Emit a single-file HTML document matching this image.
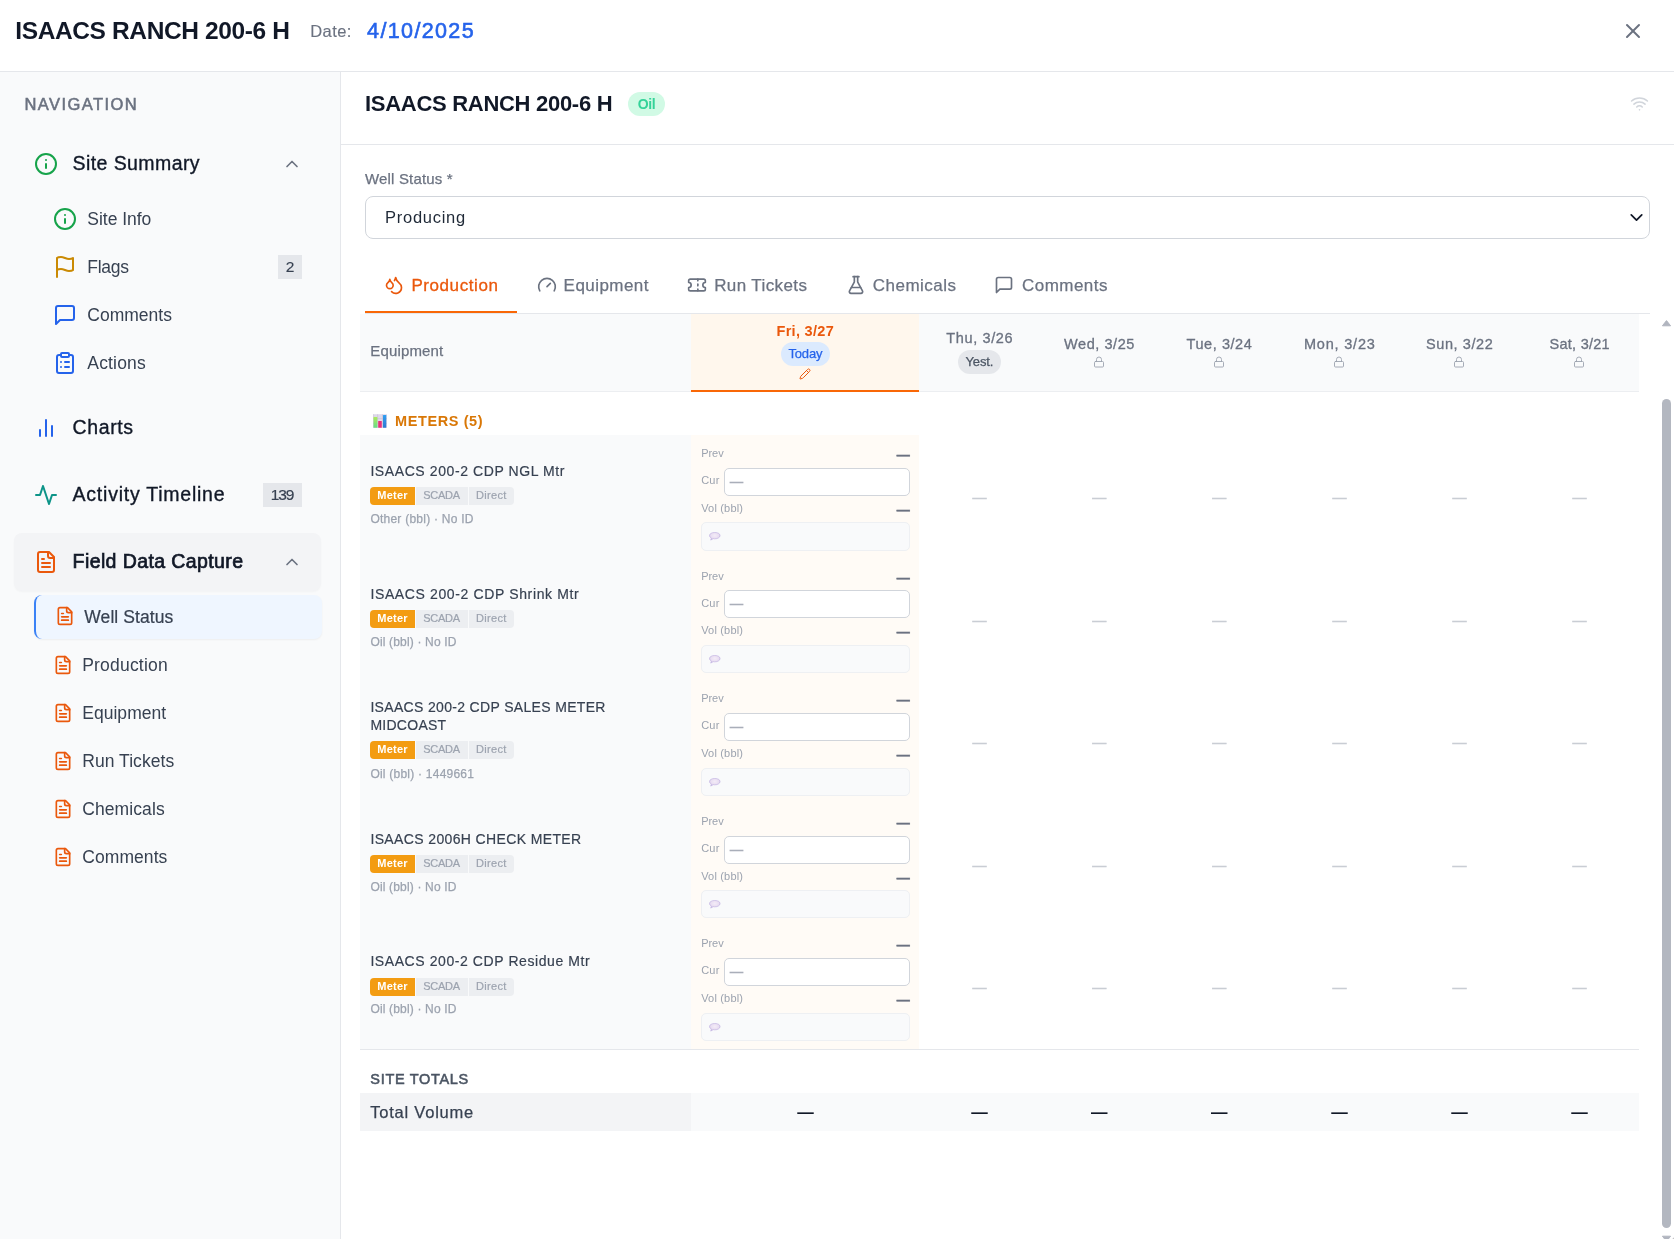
<!DOCTYPE html>
<html lang="en"><head><meta charset="utf-8"><title>ISAACS RANCH 200-6 H</title>
<style>
html,body{margin:0;padding:0}
body{width:1674px;height:1239px;overflow:hidden;position:relative;background:#fff;font-family:'Liberation Sans', sans-serif;}
.b{position:absolute;box-sizing:border-box}
.i{position:absolute;display:block;overflow:visible}
.t{position:absolute;white-space:pre;line-height:1;margin:0;font-weight:400}
#app{position:absolute;left:0;top:0;width:1674px;height:1239px;will-change:transform}
</style></head><body><div id="app">
<div class="b" style="left:0px;top:71px;width:1674px;height:1px;background:#e5e7eb"></div>
<h1 class="t" style="left:15.3px;top:19px;font-size:24.5px;color:#111827;font-weight:700;letter-spacing:-0.38px;">ISAACS RANCH 200-6 H</h1>
<span class="t" style="left:310.3px;top:23px;font-size:16.5px;color:#6b7280;letter-spacing:0.39px;-webkit-text-stroke:0.15px #6b7280;">Date:</span>
<span class="t" style="left:367.1px;top:21px;font-size:21.5px;color:#2563eb;letter-spacing:1.36px;-webkit-text-stroke:0.6px #2563eb;">4/10/2025</span>
<svg class="i" style="left:1621px;top:19px" width="24" height="24" viewBox="0 0 24 24" fill="none" stroke="#6b7280" stroke-width="2" stroke-linecap="round" stroke-linejoin="round"><path d="M18 6 6 18"/><path d="m6 6 12 12"/></svg>
<div class="b" style="left:0px;top:72px;width:340px;height:1167px;background:#f9fafb"></div>
<div class="b" style="left:340px;top:72px;width:1px;height:1167px;background:#e5e7eb"></div>
<span class="t" style="left:24.4px;top:96px;font-size:16.5px;color:#6b7280;letter-spacing:1.44px;-webkit-text-stroke:0.55px #6b7280;">NAVIGATION</span>
<svg class="i" style="left:34px;top:151.7px" width="24" height="24" viewBox="0 0 24 24" fill="none" stroke="#16a34a" stroke-width="2" stroke-linecap="round" stroke-linejoin="round"><circle cx="12" cy="12" r="10"/><path d="M12 16v-4"/><path d="M12 8h.01"/></svg>
<span class="t" style="left:72.6px;top:154px;font-size:19.5px;color:#111827;letter-spacing:0.41px;-webkit-text-stroke:0.35px #111827;">Site Summary</span>
<svg class="i" style="left:282.4px;top:153.7px" width="20" height="20" viewBox="0 0 24 24" fill="none" stroke="#6b7280" stroke-width="2" stroke-linecap="round" stroke-linejoin="round"><path d="m18 15-6-6-6 6"/></svg>
<svg class="i" style="left:53px;top:206.8px" width="24" height="24" viewBox="0 0 24 24" fill="none" stroke="#16a34a" stroke-width="2" stroke-linecap="round" stroke-linejoin="round"><circle cx="12" cy="12" r="10"/><path d="M12 16v-4"/><path d="M12 8h.01"/></svg>
<span class="t" style="left:87.3px;top:211px;font-size:17.5px;color:#374151;letter-spacing:-0.03px;">Site Info</span>
<svg class="i" style="left:53px;top:254.8px" width="24" height="24" viewBox="0 0 24 24" fill="none" stroke="#ca8a04" stroke-width="2" stroke-linecap="round" stroke-linejoin="round"><path d="M4 15s1-1 4-1 5 2 8 2 4-1 4-1V3s-1 1-4 1-5-2-8-2-4 1-4 1z"/><line x1="4" x2="4" y1="22" y2="15"/></svg>
<span class="t" style="left:87.3px;top:259px;font-size:17.5px;color:#374151;letter-spacing:-0.3px;">Flags</span>
<div class="b" style="left:278px;top:255px;width:24px;height:24px;background:#e5e7eb"></div>
<span class="t" style="left:285.69px;top:259px;font-size:15.5px;color:#374151;-webkit-text-stroke:0.15px #374151;">2</span>
<svg class="i" style="left:53px;top:302.8px" width="24" height="24" viewBox="0 0 24 24" fill="none" stroke="#2563eb" stroke-width="2" stroke-linecap="round" stroke-linejoin="round"><path d="M21 15a2 2 0 0 1-2 2H7l-4 4V5a2 2 0 0 1 2-2h14a2 2 0 0 1 2 2z"/></svg>
<span class="t" style="left:87.3px;top:307px;font-size:17.5px;color:#374151;letter-spacing:0.01px;">Comments</span>
<svg class="i" style="left:53px;top:350.8px" width="24" height="24" viewBox="0 0 24 24" fill="none" stroke="#2563eb" stroke-width="2" stroke-linecap="round" stroke-linejoin="round"><rect width="8" height="4" x="8" y="2" rx="1" ry="1"/><path d="M16 4h2a2 2 0 0 1 2 2v14a2 2 0 0 1-2 2H6a2 2 0 0 1-2-2V6a2 2 0 0 1 2-2h2"/><path d="M12 11h4"/><path d="M12 16h4"/><path d="M8 11h.01"/><path d="M8 16h.01"/></svg>
<span class="t" style="left:87.3px;top:355px;font-size:17.5px;color:#374151;letter-spacing:0.18px;">Actions</span>
<svg class="i" style="left:34px;top:415.8px" width="24" height="24" viewBox="0 0 24 24" fill="none" stroke="#2563eb" stroke-width="2" stroke-linecap="round" stroke-linejoin="round"><line x1="18" x2="18" y1="20" y2="10"/><line x1="12" x2="12" y1="20" y2="4"/><line x1="6" x2="6" y1="20" y2="14"/></svg>
<span class="t" style="left:72.6px;top:418px;font-size:19.5px;color:#111827;letter-spacing:0.61px;-webkit-text-stroke:0.35px #111827;">Charts</span>
<svg class="i" style="left:34px;top:482.5px" width="24" height="24" viewBox="0 0 24 24" fill="none" stroke="#0d9488" stroke-width="2" stroke-linecap="round" stroke-linejoin="round"><path d="M22 12h-4l-3 9L9 3l-3 9H2"/></svg>
<span class="t" style="left:72.6px;top:485px;font-size:19.5px;color:#111827;letter-spacing:0.76px;-webkit-text-stroke:0.35px #111827;">Activity Timeline</span>
<div class="b" style="left:263px;top:483px;width:39px;height:24px;background:#e5e7eb"></div>
<span class="t" style="left:270.7px;top:487px;font-size:15.5px;color:#374151;letter-spacing:-1.14px;-webkit-text-stroke:0.2px #374151;">139</span>
<div class="b" style="left:14.4px;top:533.2px;width:307.1px;height:58.2px;background:#f3f4f6;border-radius:8px;box-shadow:0 1px 2px rgba(0,0,0,.03)"></div>
<svg class="i" style="left:34px;top:549.8px" width="24" height="24" viewBox="0 0 24 24" fill="none" stroke="#ea580c" stroke-width="2" stroke-linecap="round" stroke-linejoin="round"><path d="M15 2H6a2 2 0 0 0-2 2v16a2 2 0 0 0 2 2h12a2 2 0 0 0 2-2V7Z"/><path d="M14 2v4a2 2 0 0 0 2 2h4"/><path d="M10 9H8"/><path d="M16 13H8"/><path d="M16 17H8"/></svg>
<span class="t" style="left:72.6px;top:552px;font-size:19.5px;color:#111827;letter-spacing:0.4px;-webkit-text-stroke:0.7px #111827;">Field Data Capture</span>
<svg class="i" style="left:282.4px;top:551.7px" width="20" height="20" viewBox="0 0 24 24" fill="none" stroke="#6b7280" stroke-width="2" stroke-linecap="round" stroke-linejoin="round"><path d="m18 15-6-6-6 6"/></svg>
<div class="b" style="left:34px;top:594.6px;width:287.5px;height:44.5px;background:#eff6ff;border-left:2px solid #3b82f6;border-radius:8px;box-shadow:0 1px 2px rgba(0,0,0,.05)"></div>
<svg class="i" style="left:54.5px;top:606.4px" width="20" height="20" viewBox="0 0 24 24" fill="none" stroke="#ea580c" stroke-width="2" stroke-linecap="round" stroke-linejoin="round"><path d="M15 2H6a2 2 0 0 0-2 2v16a2 2 0 0 0 2 2h12a2 2 0 0 0 2-2V7Z"/><path d="M14 2v4a2 2 0 0 0 2 2h4"/><path d="M10 9H8"/><path d="M16 13H8"/><path d="M16 17H8"/></svg>
<span class="t" style="left:84.3px;top:609px;font-size:17.5px;color:#374151;letter-spacing:0.08px;-webkit-text-stroke:0.2px #374151;">Well Status</span>
<svg class="i" style="left:52.5px;top:654.5px" width="20" height="20" viewBox="0 0 24 24" fill="none" stroke="#ea580c" stroke-width="2" stroke-linecap="round" stroke-linejoin="round"><path d="M15 2H6a2 2 0 0 0-2 2v16a2 2 0 0 0 2 2h12a2 2 0 0 0 2-2V7Z"/><path d="M14 2v4a2 2 0 0 0 2 2h4"/><path d="M10 9H8"/><path d="M16 13H8"/><path d="M16 17H8"/></svg>
<span class="t" style="left:82.2px;top:657px;font-size:17.5px;color:#374151;letter-spacing:0.2px;">Production</span>
<svg class="i" style="left:52.5px;top:702.5px" width="20" height="20" viewBox="0 0 24 24" fill="none" stroke="#ea580c" stroke-width="2" stroke-linecap="round" stroke-linejoin="round"><path d="M15 2H6a2 2 0 0 0-2 2v16a2 2 0 0 0 2 2h12a2 2 0 0 0 2-2V7Z"/><path d="M14 2v4a2 2 0 0 0 2 2h4"/><path d="M10 9H8"/><path d="M16 13H8"/><path d="M16 17H8"/></svg>
<span class="t" style="left:82.2px;top:705px;font-size:17.5px;color:#374151;letter-spacing:0.04px;">Equipment</span>
<svg class="i" style="left:52.5px;top:750.5px" width="20" height="20" viewBox="0 0 24 24" fill="none" stroke="#ea580c" stroke-width="2" stroke-linecap="round" stroke-linejoin="round"><path d="M15 2H6a2 2 0 0 0-2 2v16a2 2 0 0 0 2 2h12a2 2 0 0 0 2-2V7Z"/><path d="M14 2v4a2 2 0 0 0 2 2h4"/><path d="M10 9H8"/><path d="M16 13H8"/><path d="M16 17H8"/></svg>
<span class="t" style="left:82.2px;top:753px;font-size:17.5px;color:#374151;letter-spacing:0.06px;">Run Tickets</span>
<svg class="i" style="left:52.5px;top:798.5px" width="20" height="20" viewBox="0 0 24 24" fill="none" stroke="#ea580c" stroke-width="2" stroke-linecap="round" stroke-linejoin="round"><path d="M15 2H6a2 2 0 0 0-2 2v16a2 2 0 0 0 2 2h12a2 2 0 0 0 2-2V7Z"/><path d="M14 2v4a2 2 0 0 0 2 2h4"/><path d="M10 9H8"/><path d="M16 13H8"/><path d="M16 17H8"/></svg>
<span class="t" style="left:82.2px;top:801px;font-size:17.5px;color:#374151;letter-spacing:0.1px;">Chemicals</span>
<svg class="i" style="left:52.5px;top:846.5px" width="20" height="20" viewBox="0 0 24 24" fill="none" stroke="#ea580c" stroke-width="2" stroke-linecap="round" stroke-linejoin="round"><path d="M15 2H6a2 2 0 0 0-2 2v16a2 2 0 0 0 2 2h12a2 2 0 0 0 2-2V7Z"/><path d="M14 2v4a2 2 0 0 0 2 2h4"/><path d="M10 9H8"/><path d="M16 13H8"/><path d="M16 17H8"/></svg>
<span class="t" style="left:82.2px;top:849px;font-size:17.5px;color:#374151;letter-spacing:0.08px;">Comments</span>
<h2 class="t" style="left:365px;top:93px;font-size:22px;color:#111827;font-weight:700;letter-spacing:-0.29px;">ISAACS RANCH 200-6 H</h2>
<div class="b" style="left:628px;top:92px;width:37px;height:23.5px;background:#d1fae5;border-radius:12px"></div>
<span class="t" style="left:637.7px;top:97px;font-size:14px;color:#34d399;font-weight:700;letter-spacing:-0.34px;">Oil</span>
<svg class="i" style="left:1630.1px;top:94.2px" width="19" height="19" viewBox="0 0 24 24" fill="none" stroke="#d1d5db" stroke-width="2" stroke-linecap="round" stroke-linejoin="round"><path d="M12 20h.01"/><path d="M2 8.82a15 15 0 0 1 20 0"/><path d="M5 12.859a10 10 0 0 1 14 0"/><path d="M8.5 16.429a5 5 0 0 1 7 0"/></svg>
<div class="b" style="left:341px;top:144px;width:1333px;height:1px;background:#e5e7eb"></div>
<label class="t" style="left:365px;top:171px;font-size:15px;color:#6b7280;letter-spacing:0.17px;-webkit-text-stroke:0.25px #6b7280;">Well Status *</label>
<div class="b" style="left:365px;top:196.4px;width:1284.5px;height:42.2px;background:#fff;border:1px solid #d1d5db;border-radius:8px"></div>
<span class="t" style="left:385.1px;top:209px;font-size:16.5px;color:#1f2937;letter-spacing:0.71px;">Producing</span>
<svg class="i" style="left:1626.4px;top:206.5px" width="21" height="21" viewBox="0 0 24 24" fill="none" stroke="#111827" stroke-width="2" stroke-linecap="round" stroke-linejoin="round"><path d="m6 9 6 6 6-6"/></svg>
<div class="b" style="left:365px;top:313px;width:1284.5px;height:1px;background:#e5e7eb"></div>
<div class="b" style="left:365px;top:311px;width:151.7px;height:2px;background:#f96706"></div>
<svg class="i" style="left:383.7px;top:275px" width="20" height="20" viewBox="0 0 24 24" fill="none" stroke="#ea580c" stroke-width="2" stroke-linecap="round" stroke-linejoin="round"><path d="M7 16.3c2.2 0 4-1.83 4-4.05 0-1.16-.57-2.26-1.71-3.19S7.29 6.75 7 5.3c-.29 1.45-1.14 2.84-2.29 3.76S3 11.1 3 12.25c0 2.22 1.8 4.05 4 4.05z"/><path d="M12.56 6.6A10.97 10.97 0 0 0 14 3.02c.5 2.5 2 4.9 4 6.5s3 3.5 3 5.5a6.98 6.98 0 0 1-11.91 4.97"/></svg>
<span class="t" style="left:411.4px;top:277px;font-size:17px;color:#ea580c;letter-spacing:0.58px;-webkit-text-stroke:0.3px #ea580c;">Production</span>
<svg class="i" style="left:536.7px;top:275px" width="20" height="20" viewBox="0 0 24 24" fill="none" stroke="#6b7280" stroke-width="2" stroke-linecap="round" stroke-linejoin="round"><path d="m12 14 4-4"/><path d="M3.34 19a10 10 0 1 1 17.32 0"/></svg>
<span class="t" style="left:563.6px;top:277px;font-size:17px;color:#6b7280;letter-spacing:0.45px;-webkit-text-stroke:0.25px #6b7280;">Equipment</span>
<svg class="i" style="left:686.5px;top:275px" width="20" height="20" viewBox="0 0 24 24" fill="none" stroke="#6b7280" stroke-width="2" stroke-linecap="round" stroke-linejoin="round"><path d="M2 9a3 3 0 0 1 0 6v2a2 2 0 0 0 2 2h16a2 2 0 0 0 2-2v-2a3 3 0 0 1 0-6V7a2 2 0 0 0-2-2H4a2 2 0 0 0-2 2Z"/><path d="M13 5v2"/><path d="M13 17v2"/><path d="M13 11v2"/></svg>
<span class="t" style="left:714.2px;top:277px;font-size:17px;color:#6b7280;letter-spacing:0.39px;-webkit-text-stroke:0.25px #6b7280;">Run Tickets</span>
<svg class="i" style="left:845.8px;top:275px" width="20" height="20" viewBox="0 0 24 24" fill="none" stroke="#6b7280" stroke-width="2" stroke-linecap="round" stroke-linejoin="round"><path d="M14 2v6a2 2 0 0 0 .245.96l5.51 10.08A2 2 0 0 1 18 22H6a2 2 0 0 1-1.755-2.96l5.51-10.08A2 2 0 0 0 10 8V2"/><path d="M6.453 15h11.094"/><path d="M8.5 2h7"/></svg>
<span class="t" style="left:872.8px;top:277px;font-size:17px;color:#6b7280;letter-spacing:0.48px;-webkit-text-stroke:0.25px #6b7280;">Chemicals</span>
<svg class="i" style="left:994.4px;top:275px" width="20" height="20" viewBox="0 0 24 24" fill="none" stroke="#6b7280" stroke-width="2" stroke-linecap="round" stroke-linejoin="round"><path d="M21 15a2 2 0 0 1-2 2H7l-4 4V5a2 2 0 0 1 2-2h14a2 2 0 0 1 2 2z"/></svg>
<span class="t" style="left:1022px;top:277px;font-size:17px;color:#6b7280;letter-spacing:0.46px;-webkit-text-stroke:0.25px #6b7280;">Comments</span>
<div class="b" style="left:360px;top:314px;width:1279px;height:78px;background:#f9fafb;border-bottom:1px solid #eceef1"></div>
<div class="b" style="left:691px;top:314px;width:228px;height:76px;background:#fff7ed"></div>
<div class="b" style="left:691px;top:390px;width:228px;height:2px;background:#f96706"></div>
<span class="t" style="left:370.3px;top:343px;font-size:15px;color:#6b7280;letter-spacing:0.15px;-webkit-text-stroke:0.25px #6b7280;">Equipment</span>
<span class="t" style="left:776.5px;top:324px;font-size:14.5px;color:#ea580c;font-weight:700;letter-spacing:0.3px;">Fri, 3/27</span>
<div class="b" style="left:781.2px;top:342.3px;width:48.8px;height:23.8px;background:#dbeafe;border-radius:12px"></div>
<span class="t" style="left:788.5px;top:347px;font-size:13px;color:#2563eb;letter-spacing:-0.18px;-webkit-text-stroke:0.25px #2563eb;">Today</span>
<svg class="i" style="left:799px;top:368.2px" width="12" height="12" viewBox="0 0 24 24" fill="none" stroke="#ea580c" stroke-width="2" stroke-linecap="round" stroke-linejoin="round"><path d="M21.174 6.812a1 1 0 0 0-3.986-3.987L3.842 16.174a2 2 0 0 0-.5.83l-1.321 4.352a.5.5 0 0 0 .623.622l4.353-1.32a2 2 0 0 0 .83-.497z"/><path d="m15 5 4 4"/></svg>
<span class="t" style="left:946.25px;top:331px;font-size:14.5px;color:#6b7280;letter-spacing:0.63px;-webkit-text-stroke:0.3px #6b7280;">Thu, 3/26</span>
<div class="b" style="left:957.7px;top:350.2px;width:43.3px;height:23.7px;background:#e5e7eb;border-radius:12px"></div>
<span class="t" style="left:965.4px;top:355px;font-size:13px;color:#4b5563;letter-spacing:-0.11px;-webkit-text-stroke:0.25px #4b5563;">Yest.</span>
<span class="t" style="left:1064.05px;top:337px;font-size:14.5px;color:#6b7280;letter-spacing:0.56px;-webkit-text-stroke:0.3px #6b7280;">Wed, 3/25</span>
<svg class="i" style="left:1092.9px;top:356.2px" width="12" height="12" viewBox="0 0 24 24" fill="none" stroke="#9ca3af" stroke-width="1.8" stroke-linecap="round" stroke-linejoin="round"><rect width="18" height="11" x="3" y="11" rx="2" ry="2"/><path d="M7 11V7a5 5 0 0 1 10 0v4"/></svg>
<span class="t" style="left:1186.6px;top:337px;font-size:14.5px;color:#6b7280;letter-spacing:0.56px;-webkit-text-stroke:0.3px #6b7280;">Tue, 3/24</span>
<svg class="i" style="left:1212.9px;top:356.2px" width="12" height="12" viewBox="0 0 24 24" fill="none" stroke="#9ca3af" stroke-width="1.8" stroke-linecap="round" stroke-linejoin="round"><rect width="18" height="11" x="3" y="11" rx="2" ry="2"/><path d="M7 11V7a5 5 0 0 1 10 0v4"/></svg>
<span class="t" style="left:1304px;top:337px;font-size:14.5px;color:#6b7280;letter-spacing:0.79px;-webkit-text-stroke:0.3px #6b7280;">Mon, 3/23</span>
<svg class="i" style="left:1333.1px;top:356.2px" width="12" height="12" viewBox="0 0 24 24" fill="none" stroke="#9ca3af" stroke-width="1.8" stroke-linecap="round" stroke-linejoin="round"><rect width="18" height="11" x="3" y="11" rx="2" ry="2"/><path d="M7 11V7a5 5 0 0 1 10 0v4"/></svg>
<span class="t" style="left:1426.1px;top:337px;font-size:14.5px;color:#6b7280;letter-spacing:0.57px;-webkit-text-stroke:0.3px #6b7280;">Sun, 3/22</span>
<svg class="i" style="left:1453.1px;top:356.2px" width="12" height="12" viewBox="0 0 24 24" fill="none" stroke="#9ca3af" stroke-width="1.8" stroke-linecap="round" stroke-linejoin="round"><rect width="18" height="11" x="3" y="11" rx="2" ry="2"/><path d="M7 11V7a5 5 0 0 1 10 0v4"/></svg>
<span class="t" style="left:1549.55px;top:337px;font-size:14.5px;color:#6b7280;letter-spacing:0.26px;-webkit-text-stroke:0.3px #6b7280;">Sat, 3/21</span>
<svg class="i" style="left:1573.3px;top:356.2px" width="12" height="12" viewBox="0 0 24 24" fill="none" stroke="#9ca3af" stroke-width="1.8" stroke-linecap="round" stroke-linejoin="round"><rect width="18" height="11" x="3" y="11" rx="2" ry="2"/><path d="M7 11V7a5 5 0 0 1 10 0v4"/></svg>
<svg class="i" style="left:372.8px;top:414px" width="14.2" height="14" viewBox="0 0 14.2 14"><defs><linearGradient id="eg" x1="0" y1="0" x2="0" y2="1"><stop offset="0" stop-color="#aeea5c"/><stop offset="1" stop-color="#66dd86"/></linearGradient><linearGradient id="eb" x1="0" y1="0" x2="0" y2="1"><stop offset="0" stop-color="#2f9ff2"/><stop offset="1" stop-color="#2f78d0"/></linearGradient></defs><rect x="0.2" y="0.2" width="13.8" height="13.6" fill="#dfd9ea"/><path d="M0.6 0.2v13.6M4.6 0.2v13.6M9.5 0.2v13.6M0.2 4.6h13.8M0.2 9.4h13.8" stroke="#c3bdd0" stroke-width="0.5" fill="none"/><rect x="0.5" y="3" width="3.9" height="10.8" rx="0.5" fill="url(#eg)"/><rect x="5.2" y="6.9" width="3.6" height="6.9" rx="0.5" fill="#e93079"/><rect x="10" y="1" width="3.3" height="12.8" rx="0.5" fill="url(#eb)"/></svg>
<span class="t" style="left:395.1px;top:414px;font-size:14.5px;color:#d97706;font-weight:700;letter-spacing:0.59px;">METERS (5)</span>
<div class="b" style="left:360px;top:435px;width:331px;height:614px;background:#f9fafb"></div>
<div class="b" style="left:691px;top:435px;width:228px;height:614px;background:#fffbf6"></div>
<div class="b" style="left:360px;top:1049px;width:1279px;height:1px;background:#e5e7eb"></div>
<span class="t" style="left:370.4px;top:464px;font-size:14px;color:#374151;letter-spacing:0.59px;-webkit-text-stroke:0.18px #374151;">ISAACS 200-2 CDP NGL Mtr</span>
<div class="b" style="left:370px;top:487.2px;width:45px;height:17.8px;background:#f39c12;border-radius:4px 0 0 4px"></div>
<span class="t" style="left:377.25px;top:490px;font-size:11px;color:#fff;font-weight:700;letter-spacing:0.24px;">Meter</span>
<div class="b" style="left:416.2px;top:487.2px;width:51.5px;height:17.8px;background:#eceef1"></div>
<span class="t" style="left:423.2px;top:490px;font-size:11px;color:#9ca3af;letter-spacing:-0.28px;-webkit-text-stroke:0.2px #9ca3af;">SCADA</span>
<div class="b" style="left:469px;top:487.2px;width:44.5px;height:17.8px;background:#eceef1;border-radius:0 4px 4px 0"></div>
<span class="t" style="left:475.95px;top:490px;font-size:11px;color:#9ca3af;letter-spacing:0.35px;-webkit-text-stroke:0.2px #9ca3af;">Direct</span>
<span class="t" style="left:370.4px;top:513px;font-size:12px;color:#9ca3af;letter-spacing:0.24px;-webkit-text-stroke:0.25px #9ca3af;">Other (bbl) · No ID</span>
<span class="t" style="left:701.2px;top:448px;font-size:11px;color:#9ca3af;letter-spacing:-0.04px;">Prev</span>
<span class="t" style="left:896.8px;top:448px;font-size:13px;color:#6b7280;font-weight:700;-webkit-text-stroke:0.6px #6b7280;">—</span>
<span class="t" style="left:701.2px;top:475px;font-size:11px;color:#9ca3af;letter-spacing:0.23px;">Cur</span>
<div class="b" style="left:724.1px;top:468px;width:185.7px;height:28px;background:#fff;border:1px solid #d1d5db;border-radius:5px"></div>
<span class="t" style="left:729.9px;top:475px;font-size:13px;color:#a9aeb9;-webkit-text-stroke:0.8px #a9aeb9;">—</span>
<span class="t" style="left:701.2px;top:503px;font-size:11px;color:#9ca3af;letter-spacing:0.18px;">Vol (bbl)</span>
<span class="t" style="left:896.8px;top:503px;font-size:13px;color:#6b7280;font-weight:700;-webkit-text-stroke:0.6px #6b7280;">—</span>
<div class="b" style="left:701.2px;top:522px;width:208.6px;height:29px;background:#f9fafb;border:1px solid #eef0f3;border-radius:5px"></div>
<svg class="i" style="left:708.7px;top:531.7px;opacity:.8" width="11.5" height="8.5" viewBox="0 0 23 17"><defs><radialGradient id="g0" cx="50%" cy="40%" r="65%"><stop offset="0" stop-color="#f3e9f7"/><stop offset="0.55" stop-color="#e6d8f0"/><stop offset="1" stop-color="#bfaee0"/></radialGradient></defs><path d="M11.5 .9C5.500 .9 .9 3.600 .9 7.100c0 2 1.500 3.800 3.900 4.900L3.400 16.200l5-2.800c1 .2 2 .3 3.100 .3 6 0 10.700-2.900 10.700-6.600S17.500 .9 11.500 .9z" fill="url(#g0)" stroke="#a893d6" stroke-width="1.1" stroke-linejoin="round"/></svg>
<span class="t" style="left:972.4px;top:490px;font-size:14px;color:#c9cdd4;-webkit-text-stroke:0.5px #c9cdd4;">—</span>
<span class="t" style="left:1092.2px;top:490px;font-size:14px;color:#c9cdd4;-webkit-text-stroke:0.5px #c9cdd4;">—</span>
<span class="t" style="left:1212.2px;top:490px;font-size:14px;color:#c9cdd4;-webkit-text-stroke:0.5px #c9cdd4;">—</span>
<span class="t" style="left:1332.4px;top:490px;font-size:14px;color:#c9cdd4;-webkit-text-stroke:0.5px #c9cdd4;">—</span>
<span class="t" style="left:1452.4px;top:490px;font-size:14px;color:#c9cdd4;-webkit-text-stroke:0.5px #c9cdd4;">—</span>
<span class="t" style="left:1572.6px;top:490px;font-size:14px;color:#c9cdd4;-webkit-text-stroke:0.5px #c9cdd4;">—</span>
<span class="t" style="left:370.4px;top:587px;font-size:14px;color:#374151;letter-spacing:0.63px;-webkit-text-stroke:0.18px #374151;">ISAACS 200-2 CDP Shrink Mtr</span>
<div class="b" style="left:370px;top:610.2px;width:45px;height:17.8px;background:#f39c12;border-radius:4px 0 0 4px"></div>
<span class="t" style="left:377.25px;top:613px;font-size:11px;color:#fff;font-weight:700;letter-spacing:0.24px;">Meter</span>
<div class="b" style="left:416.2px;top:610.2px;width:51.5px;height:17.8px;background:#eceef1"></div>
<span class="t" style="left:423.2px;top:613px;font-size:11px;color:#9ca3af;letter-spacing:-0.28px;-webkit-text-stroke:0.2px #9ca3af;">SCADA</span>
<div class="b" style="left:469px;top:610.2px;width:44.5px;height:17.8px;background:#eceef1;border-radius:0 4px 4px 0"></div>
<span class="t" style="left:475.95px;top:613px;font-size:11px;color:#9ca3af;letter-spacing:0.35px;-webkit-text-stroke:0.2px #9ca3af;">Direct</span>
<span class="t" style="left:370.4px;top:636px;font-size:12px;color:#9ca3af;letter-spacing:0.17px;-webkit-text-stroke:0.25px #9ca3af;">Oil (bbl) · No ID</span>
<span class="t" style="left:701.2px;top:571px;font-size:11px;color:#9ca3af;letter-spacing:-0.04px;">Prev</span>
<span class="t" style="left:896.8px;top:571px;font-size:13px;color:#6b7280;font-weight:700;-webkit-text-stroke:0.6px #6b7280;">—</span>
<span class="t" style="left:701.2px;top:598px;font-size:11px;color:#9ca3af;letter-spacing:0.23px;">Cur</span>
<div class="b" style="left:724.1px;top:590px;width:185.7px;height:28px;background:#fff;border:1px solid #d1d5db;border-radius:5px"></div>
<span class="t" style="left:729.9px;top:597px;font-size:13px;color:#a9aeb9;-webkit-text-stroke:0.8px #a9aeb9;">—</span>
<span class="t" style="left:701.2px;top:625px;font-size:11px;color:#9ca3af;letter-spacing:0.18px;">Vol (bbl)</span>
<span class="t" style="left:896.8px;top:625px;font-size:13px;color:#6b7280;font-weight:700;-webkit-text-stroke:0.6px #6b7280;">—</span>
<div class="b" style="left:701.2px;top:645px;width:208.6px;height:28px;background:#f9fafb;border:1px solid #eef0f3;border-radius:5px"></div>
<svg class="i" style="left:708.7px;top:654.7px;opacity:.8" width="11.5" height="8.5" viewBox="0 0 23 17"><defs><radialGradient id="g1" cx="50%" cy="40%" r="65%"><stop offset="0" stop-color="#f3e9f7"/><stop offset="0.55" stop-color="#e6d8f0"/><stop offset="1" stop-color="#bfaee0"/></radialGradient></defs><path d="M11.5 .9C5.500 .9 .9 3.600 .9 7.100c0 2 1.500 3.800 3.900 4.900L3.400 16.200l5-2.800c1 .2 2 .3 3.100 .3 6 0 10.700-2.900 10.700-6.600S17.500 .9 11.500 .9z" fill="url(#g1)" stroke="#a893d6" stroke-width="1.1" stroke-linejoin="round"/></svg>
<span class="t" style="left:972.4px;top:613px;font-size:14px;color:#c9cdd4;-webkit-text-stroke:0.5px #c9cdd4;">—</span>
<span class="t" style="left:1092.2px;top:613px;font-size:14px;color:#c9cdd4;-webkit-text-stroke:0.5px #c9cdd4;">—</span>
<span class="t" style="left:1212.2px;top:613px;font-size:14px;color:#c9cdd4;-webkit-text-stroke:0.5px #c9cdd4;">—</span>
<span class="t" style="left:1332.4px;top:613px;font-size:14px;color:#c9cdd4;-webkit-text-stroke:0.5px #c9cdd4;">—</span>
<span class="t" style="left:1452.4px;top:613px;font-size:14px;color:#c9cdd4;-webkit-text-stroke:0.5px #c9cdd4;">—</span>
<span class="t" style="left:1572.6px;top:613px;font-size:14px;color:#c9cdd4;-webkit-text-stroke:0.5px #c9cdd4;">—</span>
<span class="t" style="left:370.4px;top:700px;font-size:14px;color:#374151;letter-spacing:0.33px;-webkit-text-stroke:0.18px #374151;">ISAACS 200-2 CDP SALES METER</span>
<span class="t" style="left:370.4px;top:718px;font-size:14px;color:#374151;letter-spacing:0.27px;-webkit-text-stroke:0.18px #374151;">MIDCOAST</span>
<div class="b" style="left:370px;top:741.2px;width:45px;height:17.8px;background:#f39c12;border-radius:4px 0 0 4px"></div>
<span class="t" style="left:377.25px;top:744px;font-size:11px;color:#fff;font-weight:700;letter-spacing:0.24px;">Meter</span>
<div class="b" style="left:416.2px;top:741.2px;width:51.5px;height:17.8px;background:#eceef1"></div>
<span class="t" style="left:423.2px;top:744px;font-size:11px;color:#9ca3af;letter-spacing:-0.28px;-webkit-text-stroke:0.2px #9ca3af;">SCADA</span>
<div class="b" style="left:469px;top:741.2px;width:44.5px;height:17.8px;background:#eceef1;border-radius:0 4px 4px 0"></div>
<span class="t" style="left:475.95px;top:744px;font-size:11px;color:#9ca3af;letter-spacing:0.35px;-webkit-text-stroke:0.2px #9ca3af;">Direct</span>
<span class="t" style="left:370.4px;top:768px;font-size:12px;color:#9ca3af;letter-spacing:0.23px;-webkit-text-stroke:0.25px #9ca3af;">Oil (bbl) · 1449661</span>
<span class="t" style="left:701.2px;top:693px;font-size:11px;color:#9ca3af;letter-spacing:-0.04px;">Prev</span>
<span class="t" style="left:896.8px;top:693px;font-size:13px;color:#6b7280;font-weight:700;-webkit-text-stroke:0.6px #6b7280;">—</span>
<span class="t" style="left:701.2px;top:720px;font-size:11px;color:#9ca3af;letter-spacing:0.23px;">Cur</span>
<div class="b" style="left:724.1px;top:713px;width:185.7px;height:28px;background:#fff;border:1px solid #d1d5db;border-radius:5px"></div>
<span class="t" style="left:729.9px;top:720px;font-size:13px;color:#a9aeb9;-webkit-text-stroke:0.8px #a9aeb9;">—</span>
<span class="t" style="left:701.2px;top:748px;font-size:11px;color:#9ca3af;letter-spacing:0.18px;">Vol (bbl)</span>
<span class="t" style="left:896.8px;top:748px;font-size:13px;color:#6b7280;font-weight:700;-webkit-text-stroke:0.6px #6b7280;">—</span>
<div class="b" style="left:701.2px;top:768px;width:208.6px;height:28px;background:#f9fafb;border:1px solid #eef0f3;border-radius:5px"></div>
<svg class="i" style="left:708.7px;top:777.7px;opacity:.8" width="11.5" height="8.5" viewBox="0 0 23 17"><defs><radialGradient id="g2" cx="50%" cy="40%" r="65%"><stop offset="0" stop-color="#f3e9f7"/><stop offset="0.55" stop-color="#e6d8f0"/><stop offset="1" stop-color="#bfaee0"/></radialGradient></defs><path d="M11.5 .9C5.500 .9 .9 3.600 .9 7.100c0 2 1.500 3.800 3.900 4.900L3.400 16.200l5-2.800c1 .2 2 .3 3.100 .3 6 0 10.700-2.900 10.700-6.600S17.500 .9 11.500 .9z" fill="url(#g2)" stroke="#a893d6" stroke-width="1.1" stroke-linejoin="round"/></svg>
<span class="t" style="left:972.4px;top:735px;font-size:14px;color:#c9cdd4;-webkit-text-stroke:0.5px #c9cdd4;">—</span>
<span class="t" style="left:1092.2px;top:735px;font-size:14px;color:#c9cdd4;-webkit-text-stroke:0.5px #c9cdd4;">—</span>
<span class="t" style="left:1212.2px;top:735px;font-size:14px;color:#c9cdd4;-webkit-text-stroke:0.5px #c9cdd4;">—</span>
<span class="t" style="left:1332.4px;top:735px;font-size:14px;color:#c9cdd4;-webkit-text-stroke:0.5px #c9cdd4;">—</span>
<span class="t" style="left:1452.4px;top:735px;font-size:14px;color:#c9cdd4;-webkit-text-stroke:0.5px #c9cdd4;">—</span>
<span class="t" style="left:1572.6px;top:735px;font-size:14px;color:#c9cdd4;-webkit-text-stroke:0.5px #c9cdd4;">—</span>
<span class="t" style="left:370.4px;top:832px;font-size:14px;color:#374151;letter-spacing:0.37px;-webkit-text-stroke:0.18px #374151;">ISAACS 2006H CHECK METER</span>
<div class="b" style="left:370px;top:855.2px;width:45px;height:17.8px;background:#f39c12;border-radius:4px 0 0 4px"></div>
<span class="t" style="left:377.25px;top:858px;font-size:11px;color:#fff;font-weight:700;letter-spacing:0.24px;">Meter</span>
<div class="b" style="left:416.2px;top:855.2px;width:51.5px;height:17.8px;background:#eceef1"></div>
<span class="t" style="left:423.2px;top:858px;font-size:11px;color:#9ca3af;letter-spacing:-0.28px;-webkit-text-stroke:0.2px #9ca3af;">SCADA</span>
<div class="b" style="left:469px;top:855.2px;width:44.5px;height:17.8px;background:#eceef1;border-radius:0 4px 4px 0"></div>
<span class="t" style="left:475.95px;top:858px;font-size:11px;color:#9ca3af;letter-spacing:0.35px;-webkit-text-stroke:0.2px #9ca3af;">Direct</span>
<span class="t" style="left:370.4px;top:881px;font-size:12px;color:#9ca3af;letter-spacing:0.17px;-webkit-text-stroke:0.25px #9ca3af;">Oil (bbl) · No ID</span>
<span class="t" style="left:701.2px;top:816px;font-size:11px;color:#9ca3af;letter-spacing:-0.04px;">Prev</span>
<span class="t" style="left:896.8px;top:816px;font-size:13px;color:#6b7280;font-weight:700;-webkit-text-stroke:0.6px #6b7280;">—</span>
<span class="t" style="left:701.2px;top:843px;font-size:11px;color:#9ca3af;letter-spacing:0.23px;">Cur</span>
<div class="b" style="left:724.1px;top:836px;width:185.7px;height:28px;background:#fff;border:1px solid #d1d5db;border-radius:5px"></div>
<span class="t" style="left:729.9px;top:843px;font-size:13px;color:#a9aeb9;-webkit-text-stroke:0.8px #a9aeb9;">—</span>
<span class="t" style="left:701.2px;top:871px;font-size:11px;color:#9ca3af;letter-spacing:0.18px;">Vol (bbl)</span>
<span class="t" style="left:896.8px;top:871px;font-size:13px;color:#6b7280;font-weight:700;-webkit-text-stroke:0.6px #6b7280;">—</span>
<div class="b" style="left:701.2px;top:890px;width:208.6px;height:28px;background:#f9fafb;border:1px solid #eef0f3;border-radius:5px"></div>
<svg class="i" style="left:708.7px;top:899.7px;opacity:.8" width="11.5" height="8.5" viewBox="0 0 23 17"><defs><radialGradient id="g3" cx="50%" cy="40%" r="65%"><stop offset="0" stop-color="#f3e9f7"/><stop offset="0.55" stop-color="#e6d8f0"/><stop offset="1" stop-color="#bfaee0"/></radialGradient></defs><path d="M11.5 .9C5.500 .9 .9 3.600 .9 7.100c0 2 1.500 3.800 3.900 4.900L3.400 16.200l5-2.800c1 .2 2 .3 3.100 .3 6 0 10.700-2.900 10.700-6.600S17.500 .9 11.500 .9z" fill="url(#g3)" stroke="#a893d6" stroke-width="1.1" stroke-linejoin="round"/></svg>
<span class="t" style="left:972.4px;top:858px;font-size:14px;color:#c9cdd4;-webkit-text-stroke:0.5px #c9cdd4;">—</span>
<span class="t" style="left:1092.2px;top:858px;font-size:14px;color:#c9cdd4;-webkit-text-stroke:0.5px #c9cdd4;">—</span>
<span class="t" style="left:1212.2px;top:858px;font-size:14px;color:#c9cdd4;-webkit-text-stroke:0.5px #c9cdd4;">—</span>
<span class="t" style="left:1332.4px;top:858px;font-size:14px;color:#c9cdd4;-webkit-text-stroke:0.5px #c9cdd4;">—</span>
<span class="t" style="left:1452.4px;top:858px;font-size:14px;color:#c9cdd4;-webkit-text-stroke:0.5px #c9cdd4;">—</span>
<span class="t" style="left:1572.6px;top:858px;font-size:14px;color:#c9cdd4;-webkit-text-stroke:0.5px #c9cdd4;">—</span>
<span class="t" style="left:370.4px;top:954px;font-size:14px;color:#374151;letter-spacing:0.58px;-webkit-text-stroke:0.18px #374151;">ISAACS 200-2 CDP Residue Mtr</span>
<div class="b" style="left:370px;top:978.2px;width:45px;height:17.8px;background:#f39c12;border-radius:4px 0 0 4px"></div>
<span class="t" style="left:377.25px;top:981px;font-size:11px;color:#fff;font-weight:700;letter-spacing:0.24px;">Meter</span>
<div class="b" style="left:416.2px;top:978.2px;width:51.5px;height:17.8px;background:#eceef1"></div>
<span class="t" style="left:423.2px;top:981px;font-size:11px;color:#9ca3af;letter-spacing:-0.28px;-webkit-text-stroke:0.2px #9ca3af;">SCADA</span>
<div class="b" style="left:469px;top:978.2px;width:44.5px;height:17.8px;background:#eceef1;border-radius:0 4px 4px 0"></div>
<span class="t" style="left:475.95px;top:981px;font-size:11px;color:#9ca3af;letter-spacing:0.35px;-webkit-text-stroke:0.2px #9ca3af;">Direct</span>
<span class="t" style="left:370.4px;top:1003px;font-size:12px;color:#9ca3af;letter-spacing:0.17px;-webkit-text-stroke:0.25px #9ca3af;">Oil (bbl) · No ID</span>
<span class="t" style="left:701.2px;top:938px;font-size:11px;color:#9ca3af;letter-spacing:-0.04px;">Prev</span>
<span class="t" style="left:896.8px;top:938px;font-size:13px;color:#6b7280;font-weight:700;-webkit-text-stroke:0.6px #6b7280;">—</span>
<span class="t" style="left:701.2px;top:965px;font-size:11px;color:#9ca3af;letter-spacing:0.23px;">Cur</span>
<div class="b" style="left:724.1px;top:958px;width:185.7px;height:28px;background:#fff;border:1px solid #d1d5db;border-radius:5px"></div>
<span class="t" style="left:729.9px;top:965px;font-size:13px;color:#a9aeb9;-webkit-text-stroke:0.8px #a9aeb9;">—</span>
<span class="t" style="left:701.2px;top:993px;font-size:11px;color:#9ca3af;letter-spacing:0.18px;">Vol (bbl)</span>
<span class="t" style="left:896.8px;top:993px;font-size:13px;color:#6b7280;font-weight:700;-webkit-text-stroke:0.6px #6b7280;">—</span>
<div class="b" style="left:701.2px;top:1013px;width:208.6px;height:28px;background:#f9fafb;border:1px solid #eef0f3;border-radius:5px"></div>
<svg class="i" style="left:708.7px;top:1022.7px;opacity:.8" width="11.5" height="8.5" viewBox="0 0 23 17"><defs><radialGradient id="g4" cx="50%" cy="40%" r="65%"><stop offset="0" stop-color="#f3e9f7"/><stop offset="0.55" stop-color="#e6d8f0"/><stop offset="1" stop-color="#bfaee0"/></radialGradient></defs><path d="M11.5 .9C5.500 .9 .9 3.600 .9 7.100c0 2 1.500 3.800 3.900 4.900L3.400 16.200l5-2.800c1 .2 2 .3 3.100 .3 6 0 10.700-2.900 10.700-6.600S17.500 .9 11.500 .9z" fill="url(#g4)" stroke="#a893d6" stroke-width="1.1" stroke-linejoin="round"/></svg>
<span class="t" style="left:972.4px;top:980px;font-size:14px;color:#c9cdd4;-webkit-text-stroke:0.5px #c9cdd4;">—</span>
<span class="t" style="left:1092.2px;top:980px;font-size:14px;color:#c9cdd4;-webkit-text-stroke:0.5px #c9cdd4;">—</span>
<span class="t" style="left:1212.2px;top:980px;font-size:14px;color:#c9cdd4;-webkit-text-stroke:0.5px #c9cdd4;">—</span>
<span class="t" style="left:1332.4px;top:980px;font-size:14px;color:#c9cdd4;-webkit-text-stroke:0.5px #c9cdd4;">—</span>
<span class="t" style="left:1452.4px;top:980px;font-size:14px;color:#c9cdd4;-webkit-text-stroke:0.5px #c9cdd4;">—</span>
<span class="t" style="left:1572.6px;top:980px;font-size:14px;color:#c9cdd4;-webkit-text-stroke:0.5px #c9cdd4;">—</span>
<span class="t" style="left:370.3px;top:1072px;font-size:14.5px;color:#4b5563;letter-spacing:0.69px;-webkit-text-stroke:0.55px #4b5563;">SITE TOTALS</span>
<div class="b" style="left:360px;top:1093.2px;width:331px;height:37.4px;background:#f3f4f6"></div>
<div class="b" style="left:691px;top:1093.2px;width:948px;height:37.4px;background:#f9fafb"></div>
<span class="t" style="left:370.3px;top:1104px;font-size:16.5px;color:#374151;letter-spacing:0.77px;-webkit-text-stroke:0.25px #374151;">Total Volume</span>
<span class="t" style="left:797.15px;top:1104px;font-size:16.5px;color:#111827;font-weight:700;">—</span>
<span class="t" style="left:971.15px;top:1104px;font-size:16.5px;color:#111827;font-weight:700;">—</span>
<span class="t" style="left:1090.95px;top:1104px;font-size:16.5px;color:#111827;font-weight:700;">—</span>
<span class="t" style="left:1210.95px;top:1104px;font-size:16.5px;color:#111827;font-weight:700;">—</span>
<span class="t" style="left:1331.15px;top:1104px;font-size:16.5px;color:#111827;font-weight:700;">—</span>
<span class="t" style="left:1451.15px;top:1104px;font-size:16.5px;color:#111827;font-weight:700;">—</span>
<span class="t" style="left:1571.35px;top:1104px;font-size:16.5px;color:#111827;font-weight:700;">—</span>
<svg class="i" style="left:1660px;top:318.5px" width="12" height="8" viewBox="0 0 12 8"><path d="M6.5 1.6 10.6 6.800H2.400z" fill="#b1b5bf" stroke="#b1b5bf" stroke-width="1" stroke-linejoin="round"/></svg>
<div class="b" style="left:1662px;top:399px;width:9px;height:828.8px;background:#b3b7c0;border-radius:4.5px"></div>
<svg class="i" style="left:1660px;top:1234.5px" width="12" height="8" viewBox="0 0 12 8"><path d="M6.5 6.4 10.6 1.200H2.400z" fill="#b1b5bf" stroke="#b1b5bf" stroke-width="1" stroke-linejoin="round"/></svg>
<div class="b" style="left:1673px;top:1238px;width:1px;height:1px;background:#c4c4c6"></div>
<div class="b" style="left:1673px;top:1237px;width:1px;height:1px;background:#efeff1"></div>
<div class="b" style="left:1672px;top:1238px;width:1px;height:1px;background:#efeff1"></div>
</div></body></html>
